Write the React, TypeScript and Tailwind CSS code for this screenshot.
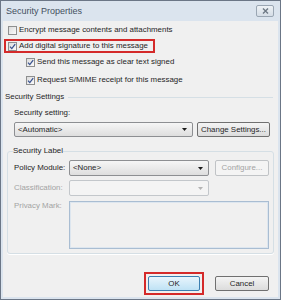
import React from "react";

const txt = "whitespace-nowrap text-[7.9px] leading-[14px] text-[#1f1f1f]";

function Check({ checked }: { checked: boolean }) {
  return (
    <span className="flex h-[9px] w-[9px] shrink-0 items-center justify-center border border-[#8e8f8f] bg-gradient-to-br from-[#dcdcdc] to-[#fbfbfb]">
      {checked && (
        <svg width="7" height="7" viewBox="0 0 7 7">
          <path d="M1 3.6 L2.8 5.6 L6.2 1.2" fill="none" stroke="#3a5390" strokeWidth="1.3" />
        </svg>
      )}
    </span>
  );
}

function Arrow({ disabled }: { disabled?: boolean }) {
  return (
    <svg width="5" height="3" viewBox="0 0 5 3" className="mr-[5px] shrink-0">
      <path d="M0 0 L5 0 L2.5 3 Z" fill={disabled ? "#b4b4b4" : "#1a1a1a"} />
    </svg>
  );
}

function Select({ value, width, disabled }: { value?: string; width: string; disabled?: boolean }) {
  return (
    <div
      className={`flex h-full shrink-0 items-center justify-between rounded-[2px] border ${width} ${
        disabled
          ? "border-[#c3c7cb] bg-[#f4f4f4]"
          : "border-[#8d8f92] bg-gradient-to-b from-[#f6f6f6] to-[#dedede]"
      }`}
    >
      <span className={`${txt} pl-[3px]`}>{value}</span>
      <Arrow disabled={disabled} />
    </div>
  );
}

function Button({ label, width, disabled, primary }: { label: string; width: string; disabled?: boolean; primary?: boolean }) {
  let skin = "border-[#707070] bg-gradient-to-b from-[#f4f4f4] to-[#dcdcdc] text-[#1f1f1f]";
  if (disabled) skin = "border-[#c0c3c6] bg-[#f4f4f4] text-[#a3a3a3]";
  if (primary) skin = "border-[#3c7fb1] bg-gradient-to-b from-[#e8f5fc] to-[#bfe2f5] text-[#1f1f1f]";
  return (
    <div className={`flex h-full shrink-0 items-center justify-center rounded-[2px] border ${width} ${skin}`}>
      <span className="whitespace-nowrap text-[7.9px] leading-[14px]">{label}</span>
    </div>
  );
}

export default function App() {
  return (
    <div className="font-['Liberation_Sans',Arial,sans-serif]">
      <div className="flex h-[300px] w-[281px] flex-col border border-[#6b7686] bg-[#dbe4ee] px-[2px] pb-[2px]">
        {/* title bar */}
        <div className="flex h-[20px] shrink-0 items-center justify-between pl-[3px] pr-[4px]">
          <span className="whitespace-nowrap text-[9px] leading-[14px] text-[#44505e]">Security Properties</span>
          <div className="flex h-[12px] w-[18px] items-center justify-center rounded-[2px] border border-[#9aa6b3] bg-gradient-to-b from-[#eef2f6] to-[#d5dde6]">
            <svg width="7" height="6" viewBox="0 0 7 6">
              <path d="M1 0.5 L6 5.5 M6 0.5 L1 5.5" stroke="#6d7884" strokeWidth="1.4" />
            </svg>
          </div>
        </div>

        {/* client */}
        <div className="flex flex-1 flex-col bg-[#f0f0f0]">
          <div className="mt-[2px] flex h-[14px] items-center gap-[2px] pl-[5px]">
            <Check checked={false} />
            <span className={txt}>Encrypt message contents and attachments</span>
          </div>
          <div className="ml-[1px] mt-[2px] flex h-[14px] w-[151px] items-center gap-[2px] border-2 border-[#d42a2a] pl-[2px]">
            <Check checked />
            <span className={txt}>Add digital signature to this message</span>
          </div>
          <div className="mt-[2px] flex h-[14px] items-center gap-[2px] pl-[23px]">
            <Check checked />
            <span className={txt}>Send this message as clear text signed</span>
          </div>
          <div className="mt-[4px] flex h-[14px] items-center gap-[2px] pl-[23px]">
            <Check checked />
            <span className={txt}>Request S/MIME receipt for this message</span>
          </div>

          <div className="mt-[3px] flex h-[14px] items-center pl-[2px] pr-[5px]">
            <span className={txt}>Security Settings</span>
            <div className="ml-[4px] h-px flex-1 bg-[#d5dfe5]" />
          </div>
          <div className="mt-[2px] flex h-[14px] items-center pl-[11px]">
            <span className={txt}>Security setting:</span>
          </div>
          <div className="mt-[2px] flex h-[15px] gap-[4px] pl-[11px]">
            <Select value="<Automatic>" width="w-[179px]" />
            <Button label="Change Settings..." width="w-[73px]" />
          </div>

          <fieldset className="mx-[4px] mt-[7px] rounded-[3px] border border-[#d5dfe5] pb-[4px] shadow-[0_1px_0_#ffffff]">
            <legend className={`${txt} ml-[5px] h-[14px]`}>Security Label</legend>
            <div className="mt-[2px] flex h-[16px] items-center pl-[6px]">
              <span className={`${txt} w-[55px] shrink-0`}>Policy Module:</span>
              <Select value="<None>" width="w-[140px]" />
              <div className="ml-[6px] h-full">
                <Button label="Configure..." width="w-[54px]" disabled />
              </div>
            </div>
            <div className="mt-[4px] flex h-[16px] items-center pl-[6px]">
              <span className={`${txt} w-[55px] shrink-0 text-[#a3a3a3]`}>Classification:</span>
              <Select width="w-[140px]" disabled />
            </div>
            <div className="mt-[5px] flex items-start pl-[6px]">
              <span className={`${txt} -mt-[2px] w-[55px] shrink-0 text-[#a3a3a3]`}>Privacy Mark:</span>
              <div className="h-[48px] w-[200px] border border-[#a9bdd2] bg-[#f0f0f0] shadow-[inset_0_0_0_1px_#dde6ef]" />
            </div>
          </fieldset>

          <div className="mt-auto flex items-center justify-end gap-[11px] pb-[2px] pr-[9px]">
            <div className="border-2 border-[#d42a2a] p-[2px]">
              <div className="h-[15px]">
                <Button label="OK" width="w-[52px]" primary />
              </div>
            </div>
            <div className="h-[15px]">
              <Button label="Cancel" width="w-[54px]" />
            </div>
          </div>
        </div>
      </div>
    </div>
  );
}
